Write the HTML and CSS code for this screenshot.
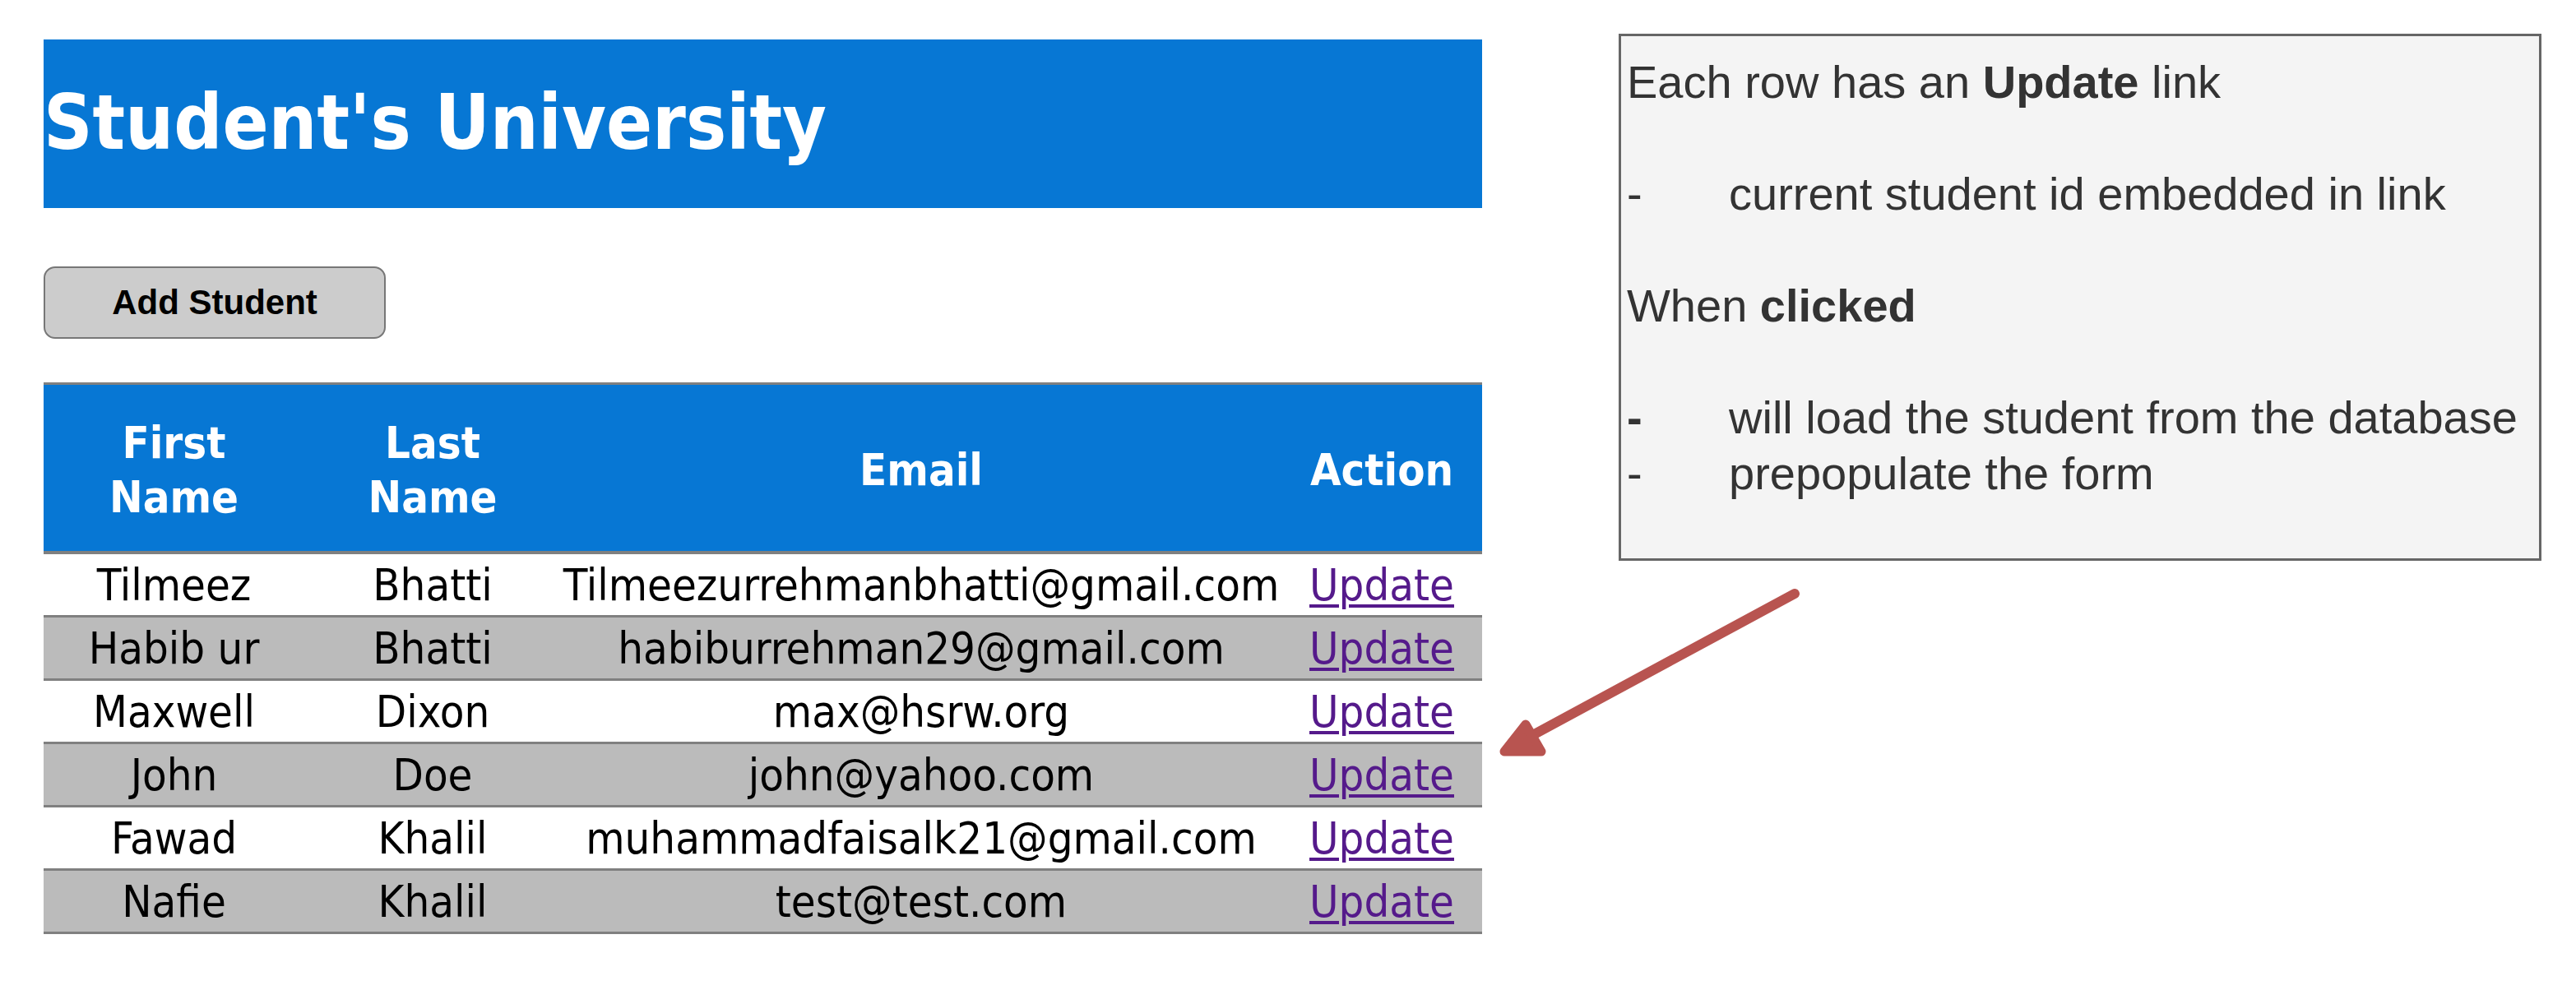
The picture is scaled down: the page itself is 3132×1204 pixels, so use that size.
FILE: index.html
```html
<!DOCTYPE html>
<html lang="en">
<head>
<meta charset="utf-8">
<title>Student's University</title>
<link rel="stylesheet" href="styles.css">
</head>
<body>
<div class="page">
  <main class="app">
    <h1 class="banner">Student's University</h1>
    <button class="add-btn" type="button">Add Student</button>
    <table class="students">
      <colgroup>
        <col class="c-first">
        <col class="c-last">
        <col class="c-email">
        <col class="c-action">
      </colgroup>
      <thead>
        <tr><th>First<br>Name</th><th>Last<br>Name</th><th>Email</th><th>Action</th></tr>
      </thead>
      <tbody>
        <tr><td>Tilmeez</td><td>Bhatti</td><td>Tilmeezurrehmanbhatti@gmail.com</td><td><a href="#">Update</a></td></tr>
        <tr><td>Habib ur</td><td>Bhatti</td><td>habiburrehman29@gmail.com</td><td><a href="#">Update</a></td></tr>
        <tr><td>Maxwell</td><td>Dixon</td><td>max@hsrw.org</td><td><a href="#">Update</a></td></tr>
        <tr><td>John</td><td>Doe</td><td>john@yahoo.com</td><td><a href="#">Update</a></td></tr>
        <tr><td>Fawad</td><td>Khalil</td><td>muhammadfaisalk21@gmail.com</td><td><a href="#">Update</a></td></tr>
        <tr><td>Nafie</td><td>Khalil</td><td>test@test.com</td><td><a href="#">Update</a></td></tr>
      </tbody>
    </table>
  </main>
  <aside class="note">
    <p class="note-line">Each row has an <b>Update</b> link</p>
    <p class="note-line gap"><span class="dash">-</span><span>current student id embedded in link</span></p>
    <p class="note-line gap">When <b>clicked</b></p>
    <p class="note-line gap"><span class="dash bold">-</span><span>will load the student from the database</span></p>
    <p class="note-line"><span class="dash">-</span><span>prepopulate the form</span></p>
  </aside>
  <svg class="arrow" width="3132" height="1204" viewBox="0 0 3132 1204" aria-hidden="true">
    <line x1="2182" y1="722" x2="1858" y2="897" stroke="#b85450" stroke-width="12" stroke-linecap="round"/>
    <polygon points="1855,881 1829,914 1874,914" fill="#b85450" stroke="#b85450" stroke-width="11" stroke-linejoin="round"/>
  </svg>
</div>
</body>
</html>
```

FILE: styles.css
```css
html, body {
  margin: 0;
  padding: 0;
  background: #ffffff;
}

.page {
  position: relative;
  width: 3132px;
  height: 1204px;
  display: flex;
  align-items: flex-start;
  padding: 41px 0 0 53px;
  box-sizing: border-box;
  gap: 166px;
}

.app {
  width: 1749px;
  margin-top: 7px;
  display: flex;
  flex-direction: column;
  align-items: flex-start;
}

.banner {
  margin: 0;
  width: 100%;
  height: 205px;
  display: flex;
  align-items: center;
  background: #0777d4;
  color: #ffffff;
  font-family: "DejaVu Sans Condensed", "DejaVu Sans", sans-serif;
  font-stretch: condensed;
  font-weight: bold;
  font-size: 92px;
  padding: 0 0 2px 0;
  box-sizing: border-box;
}

.add-btn {
  margin-top: 71px;
  width: 416px;
  height: 88px;
  background: #cccccc;
  border: 2px solid #777777;
  border-radius: 14px;
  font-family: "Liberation Sans", Arial, sans-serif;
  font-weight: bold;
  font-size: 42px;
  color: #000000;
  padding: 0;
}

.students {
  margin-top: 53px;
  width: 1749px;
  table-layout: fixed;
  border-collapse: collapse;
  font-family: "DejaVu Sans Condensed", "DejaVu Sans", sans-serif;
  font-stretch: condensed;
  font-size: 54px;
}

.c-first { width: 317px; }
.c-last { width: 312px; }
.c-email { width: 876px; }
.c-action { width: 244px; }

.students th {
  background: #0777d4;
  color: #ffffff;
  font-weight: bold;
  line-height: 66px;
  padding: 38px 0 32px;
  border-top: 3px solid #808080;
  border-bottom: 4px solid #808080;
  text-align: center;
}

.students td {
  text-align: center;
  white-space: nowrap;
  line-height: 66px;
  padding: 5px 0 3px;
  border-bottom: 3px solid #808080;
  color: #000000;
}

.students tbody tr:nth-child(even) td {
  background: #bbbbbb;
}

.students a {
  color: #551a8b;
  text-decoration: underline;
  text-decoration-thickness: 4px;
  text-underline-offset: 5px;
}

.note {
  width: 1122px;
  box-sizing: border-box;
  background: #f4f4f4;
  border: 3px solid #666666;
  padding: 22px 6px 69px 7px;
  font-family: "Liberation Sans", Arial, sans-serif;
  font-size: 56px;
  color: #333333;
}

.note-line {
  margin: 0;
  line-height: 68px;
  display: flex;
  white-space: pre;
}

.note-line.gap {
  margin-top: 68px;
}

.note-line b {
  font-weight: bold;
}

.dash {
  width: 124px;
  flex: none;
}

.dash.bold {
  font-weight: bold;
}

.arrow {
  position: absolute;
  left: 0;
  top: 0;
  pointer-events: none;
}
```
